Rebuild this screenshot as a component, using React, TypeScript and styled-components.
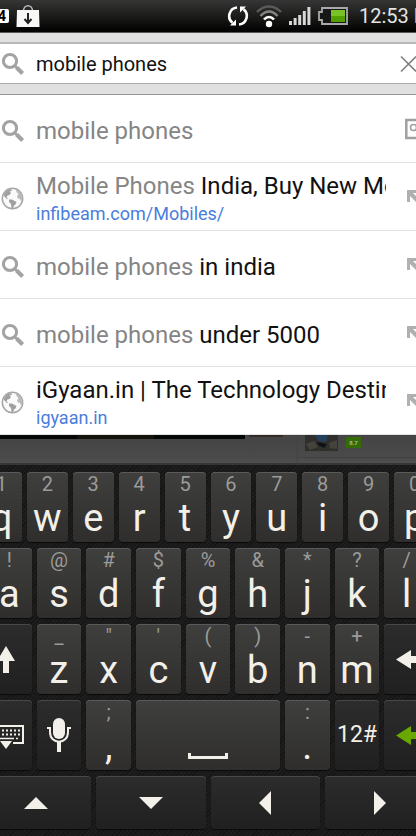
import React from 'react';
import styled, { createGlobalStyle } from 'styled-components';

const GlobalStyle = createGlobalStyle`
  *, *::before, *::after { box-sizing: border-box; }
  body { margin: 0; background: #171717; font-family: Roboto, sans-serif; }
  button, input { font: inherit; border: 0; margin: 0; padding: 0; background: none; }
`;

const Screen = styled.main`
  display: flex;
  flex-direction: column;
  overflow: hidden;
`;

const StatusBar = styled.header`
  display: flex;
  align-items: center;
  justify-content: space-between;
  height: 33px;
  overflow: hidden;
  background: linear-gradient(#363636, #1c1c1a 50%, #000);
  border-bottom: 1px solid #555;
`;

const StatusGroup = styled.div`
  display: flex;
  align-items: center;
  gap: 7px;
`;

const CountBadge = styled.span`
  width: 14px;
  height: 14px;
  margin-left: -5px;
  border-radius: 2px;
  background: #fff;
  color: #000;
  font-size: 14px;
  font-weight: 700;
  line-height: 14px;
  text-align: right;
  padding-right: 3px;
`;

const Clock = styled.time`
  width: 57px;
  margin-left: 4px;
  overflow: hidden;
  white-space: nowrap;
  color: #e4e4e4;
  font-size: 20px;
  line-height: 32px;
`;

const SearchBar = styled.form`
  padding: 9px 0 10px;
  background: #e0e0e0;
  border-bottom: 1px solid #969696;
`;

const SearchField = styled.label`
  display: flex;
  align-items: center;
  height: 42px;
  overflow: hidden;
  background: #fff;
  border-top: 2px solid #b8b8b8;
  border-bottom: 1px solid #aaa;
`;

const SearchInput = styled.input`
  flex: 1;
  min-width: 0;
  color: #111;
  font-size: 20px;
  line-height: 24px;
  outline: none;
`;

const Leading = styled.span`
  display: flex;
  flex: none;
  width: 36px;
  padding-left: 1px;
`;

const ClearButton = styled.button`
  display: flex;
  flex: none;
  width: 16px;
  overflow: hidden;
`;

const Suggestions = styled.ul`
  margin: 0;
  padding: 0;
  list-style: none;
  background: #fff;
`;

const Suggestion = styled.li`
  display: flex;
  align-items: center;
  height: 68px;
  border-bottom: 1px solid #e2e2e2;
`;

const SuggestionLink = styled.a`
  display: flex;
  flex: 1;
  min-width: 0;
  align-items: center;
  padding-top: 4px;
  text-decoration: none;
`;

const SuggestionText = styled.span`
  display: flex;
  flex: 1;
  flex-direction: column;
  min-width: 0;
  overflow: hidden;
`;

const Title = styled.span`
  overflow: hidden;
  white-space: pre;
  color: #111;
  font-size: 24px;
  line-height: 30px;
`;

const Typed = styled.span`
  color: #858585;
`;

const Address = styled.span`
  color: #4a7ddd;
  font-size: 18px;
  line-height: 25px;
`;

const FillButton = styled.button`
  display: flex;
  flex: none;
  justify-content: flex-end;
  width: 30px;
  overflow: hidden;
`;

const PagePeek = styled.div`
  display: flex;
  align-items: flex-start;
  height: 30px;
  background: linear-gradient(#444, #4a4a4a 80%, #505050);
  border-bottom: 2px solid #363636;
`;

const Keyboard = styled.section`
  display: flex;
  flex-direction: column;
  gap: 6px;
  margin: 0 -19px;
  padding: 7px 0 8px;
  background: repeating-linear-gradient(135deg, #151515 0 1px, #1d1d1d 1px 3px);
`;

const KeyRow = styled.div<{ $columns: string; $inset?: boolean; $short?: boolean }>`
  display: grid;
  grid-template-columns: ${(p) => p.$columns};
  gap: 5px;
  height: ${(p) => (p.$short ? 53 : 70)}px;
  padding: 0 ${(p) => (p.$inset ? 6 : 0)}px;
`;

const KeyCap = styled.button<{ $dark?: boolean }>`
  display: flex;
  flex-direction: column;
  align-items: center;
  justify-content: ${(p) => (p.$dark ? 'center' : 'flex-start')};
  min-width: 0;
  border-radius: 4px;
  color: #f3f0e9;
  background: ${(p) => (p.$dark ? 'linear-gradient(#2c2c2c, #202020)' : 'linear-gradient(#3f3f3e, #2f2e2d)')};
  box-shadow: inset 0 1px ${(p) => (p.$dark ? '#484848' : '#5a5a5a')}, 0 1px 1px #0b0b0b;
`;

const Hint = styled.span`
  color: #9b9b9a;
  font-size: 20px;
  line-height: 24px;
`;

const Letter = styled.span`
  font-size: 38px;
  line-height: 44px;
`;

const ModeText = styled.span`
  font-size: 23px;
  line-height: 28px;
`;

const SpaceMark = styled.span`
  width: 40px;
  height: 6px;
  margin-top: 53px;
  border: solid #f3f0e9;
  border-width: 0 3px 3px;
`;

const SearchIcon = () => (
  <svg width="24" height="24" viewBox="0 0 24 24" fill="none" stroke="#a3a3a3" aria-hidden="true">
    <circle cx="9" cy="9" r="6.6" strokeWidth="3" />
    <path d="M14 14l3 3" strokeWidth="2.5" />
    <path d="M15.6 15.6l6 6" strokeWidth="4.2" />
  </svg>
);

const GlobeIcon = () => (
  <svg width="23" height="23" viewBox="0 0 23 23" aria-hidden="true">
    <circle cx="11.5" cy="11.5" r="10.2" fill="#fafafa" stroke="#a6a6a6" strokeWidth="1.5" />
    <path d="M2.500 8L5 4.500L8 2.500L11 2.500L10.500 4L8.500 4.500L10 6L8.500 8L6.500 8.500L5.500 10.500L7.500 12L5.500 11.800L3.500 9.500Z" fill="#a0a0a0" />
    <path d="M8 12.500L11 12.500L15.500 15L14.500 17.500L13 18.500L12 21.500L10.500 21L10 17L8 15Z" fill="#a0a0a0" />
    <path d="M15 2.500L18.500 4.500L21 8L21.500 12L20 14.500L19 12L17 11.500L16 9.500L17.500 7L15.500 5Z" fill="#bababa" />
  </svg>
);

const FillArrow = () => (
  <svg width="10" height="14" viewBox="0 0 10 14" aria-hidden="true">
    <path d="M1 0H14V3H7L15 11L12 14L4 6V12H1Z" fill="#b0b0b0" />
  </svg>
);

const RefineIcon = () => (
  <svg width="11" height="22" viewBox="0 0 11 22" fill="none" stroke="#a0a0a0" aria-hidden="true">
    <path d="M12 2H1.300V20H12" strokeWidth="2.500" />
    <circle cx="8.500" cy="9.500" r="3" strokeWidth="1.600" />
  </svg>
);

const BagIcon = () => (
  <svg width="24" height="24" viewBox="0 0 24 24" aria-hidden="true">
    <path d="M7.500 7C7.500 0 16.500 0 16.500 7" fill="none" stroke="#bbb" strokeWidth="1.500" />
    <path d="M1 6H23L23.500 23H.5Z" fill="#f8f8f8" />
    <path d="M12 9V18M8.500 15L12 19L15.500 15" fill="none" stroke="#222" strokeWidth="2" />
  </svg>
);

const SyncIcon = () => (
  <svg width="22" height="22" viewBox="0 0 22 22" aria-hidden="true">
    <path d="M10 2.500A8.600 8.600 0 0 0 5.500 17.800M12 19.500A8.600 8.600 0 0 0 16.500 4.200" fill="none" stroke="#fff" strokeWidth="2.600" />
    <path d="M3 20.500H9V14.500ZM19 1.500H13V7.500Z" fill="#fff" />
  </svg>
);

const WifiIcon = () => (
  <svg width="26" height="24" viewBox="0 0 26 24" fill="none" strokeWidth="2.500" aria-hidden="true">
    <path d="M1 8C8 .5 18 .5 25 8" stroke="#5a5a5a" />
    <path d="M4.500 12C10 6 16 6 21.500 12" stroke="#858585" />
    <path d="M8 15.500C11 12 15 12 18 15.500" stroke="#fff" />
    <circle cx="13" cy="20" r="3.200" fill="#fff" />
  </svg>
);

const SignalIcon = () => (
  <svg width="22" height="18" viewBox="0 0 22 18" fill="#d8d8d8" aria-hidden="true">
    <path d="M0 14h3v4H0zM4.600 11h3v7h-3zM9.200 8h3v10h-3zM13.800 4h3v14h-3zM18.400 0h3v18h-3z" />
  </svg>
);

const BatteryIcon = () => (
  <svg width="30" height="18" viewBox="0 0 30 18" aria-hidden="true">
    <path d="M4 1H29V17H4V13H1V5H4Z" fill="#171717" stroke="#aaa" strokeWidth="1.800" />
    <path d="M13 3H27V15H13Z" fill="#54a000" />
    <path d="M13 3H27V9H13Z" fill="#79c326" />
  </svg>
);

const ClearIcon = () => (
  <svg width="16" height="18" viewBox="0 0 16 18" fill="none" stroke="#808080" strokeWidth="1.600" aria-hidden="true">
    <path d="M1 1.500L16 16.500M1 16.500L16 1.500" />
  </svg>
);

const PageThumbnails = () => (
  <svg width="416" height="28" viewBox="0 0 416 28" aria-hidden="true">
    <path d="M0 0H245V4H0Z" fill="#060807" />
    <path d="M77 0H154V4H77Z" fill="#15110b" />
    <path d="M249 0H283V2H249Z" fill="#332c25" />
    <path d="M297 0V28M297 22.500H416" stroke="#424242" />
    <path d="M305 0H338V16H305Z" fill="#302f2c" />
    <path d="M306 9L314 6L318 12L310 15ZM329 8L337 5L337 14L330 13Z" fill="#45433e" />
    <path d="M315 0H328L326 7L318 6Z" fill="#24405c" />
    <path d="M317 7L327 9L324 13L318 10Z" fill="#0f1114" />
    <rect x="346" y="2" width="15" height="11" fill="#356b06" />
    <text x="353.500" y="10" textAnchor="middle" fontSize="6" fontWeight="700" fill="#a5b896">8.7</text>
  </svg>
);

const ShiftIcon = () => (
  <svg width="18" height="28" viewBox="0 0 18 28" fill="currentColor" aria-hidden="true">
    <path d="M9 1L18 16H12V28H6V16H0Z" />
  </svg>
);

const LeftArrow = ({ color }: { color: string }) => (
  <svg width="28" height="19" viewBox="0 0 28 19" fill={color} aria-hidden="true">
    <path d="M0 9.500L15 0V6H28V13H15V19Z" />
  </svg>
);

const HideKeyboardIcon = () => (
  <svg width="35" height="29" viewBox="0 -4 35 29" aria-hidden="true">
    <path d="M10 18H1V1H34V18H24" fill="none" stroke="#f3f0e9" strokeWidth="2" />
    <path d="M5 5.500H31M5 9.500H31" stroke="#f3f0e9" strokeWidth="2" strokeDasharray="2 2" />
    <path d="M5 13.500H31" stroke="#f3f0e9" strokeWidth="1.500" strokeDasharray="2 2 16 2" />
    <path d="M11 16H23L17 24Z" fill="#f3f0e9" />
  </svg>
);

const MicIcon = () => (
  <svg width="24" height="34" viewBox="0 0 24 34" aria-hidden="true">
    <rect x="6" y="0" width="12" height="21" rx="6" fill="#f3f0e9" />
    <path d="M0 10H3V14C3 27 21 27 21 14V10H24" fill="none" stroke="#f3f0e9" strokeWidth="2" />
    <path d="M10 24H14V34H10Z" fill="#f3f0e9" />
  </svg>
);

const trianglePaths = {
  Up: 'M0 18L12 6L24 18Z',
  Down: 'M0 6H24L12 18Z',
  Left: 'M18 0V24L6 12Z',
  Right: 'M6 0L18 12L6 24Z',
};

const Triangle = ({ path }: { path: string }) => (
  <svg width="24" height="24" viewBox="0 0 24 24" fill="currentColor" aria-hidden="true">
    <path d={path} />
  </svg>
);

type Key = [hint: string, letter: string];

const topRow: Key[] = [['1', 'q'], ['2', 'w'], ['3', 'e'], ['4', 'r'], ['5', 't'], ['6', 'y'], ['7', 'u'], ['8', 'i'], ['9', 'o'], ['0', 'p']];
const homeRow: Key[] = [['!', 'a'], ['@', 's'], ['#', 'd'], ['$', 'f'], ['%', 'g'], ['&', 'h'], ['*', 'j'], ['?', 'k'], ['/', 'l']];
const bottomRow: Key[] = [['_', 'z'], ['"', 'x'], ["'", 'c'], ['(', 'v'], [')', 'b'], ['-', 'n'], ['+', 'm']];

const CharKey = ({ value: [hint, letter] }: { value: Key }) => (
  <KeyCap type="button">
    <Hint>{hint}</Hint>
    <Letter>{letter}</Letter>
  </KeyCap>
);

type Item = { typed?: string; rest?: string; address?: string; refine?: boolean };

const items: Item[] = [
  { typed: 'mobile phones', refine: true },
  { typed: 'Mobile Phones', rest: ' India, Buy New Mobiles', address: 'infibeam.com/Mobiles/' },
  { typed: 'mobile phones', rest: ' in india' },
  { typed: 'mobile phones', rest: ' under 5000' },
  { rest: 'iGyaan.in | The Technology Destination', address: 'igyaan.in' },
];

export default function App() {
  return (
    <Screen>
      <GlobalStyle />
      <StatusBar>
        <StatusGroup>
          <CountBadge>4</CountBadge>
          <BagIcon />
        </StatusGroup>
        <StatusGroup>
          <SyncIcon />
          <WifiIcon />
          <SignalIcon />
          <BatteryIcon />
          <Clock>12:53 PM</Clock>
        </StatusGroup>
      </StatusBar>
      <SearchBar onSubmit={(e) => e.preventDefault()}>
        <SearchField>
          <Leading><SearchIcon /></Leading>
          <SearchInput type="text" aria-label="Search" defaultValue="mobile phones" />
          <ClearButton type="button" aria-label="Clear"><ClearIcon /></ClearButton>
        </SearchField>
      </SearchBar>
      <Suggestions>
        {items.map((item, i) => (
          <Suggestion key={i}>
            <SuggestionLink href="#">
              <Leading>{item.address ? <GlobeIcon /> : <SearchIcon />}</Leading>
              <SuggestionText>
                <Title><Typed>{item.typed}</Typed>{item.rest}</Title>
                {item.address && <Address>{item.address}</Address>}
              </SuggestionText>
            </SuggestionLink>
            <FillButton type="button" aria-label="Use suggestion">
              {item.refine ? <RefineIcon /> : <FillArrow />}
            </FillButton>
          </Suggestion>
        ))}
      </Suggestions>
      <PagePeek><PageThumbnails /></PagePeek>
      <Keyboard aria-label="Keyboard">
        <KeyRow $columns="repeat(10, 1fr)">
          {topRow.map((k) => <CharKey key={k[1]} value={k} />)}
        </KeyRow>
        <KeyRow $columns="repeat(9, 1fr)" $inset>
          {homeRow.map((k) => <CharKey key={k[1]} value={k} />)}
        </KeyRow>
        <KeyRow $columns="51fr repeat(7, 45fr) 51fr">
          <KeyCap type="button" $dark aria-label="Shift"><ShiftIcon /></KeyCap>
          {bottomRow.map((k) => <CharKey key={k[1]} value={k} />)}
          <KeyCap type="button" $dark aria-label="Backspace"><LeftArrow color="#f3f0e9" /></KeyCap>
        </KeyRow>
        <KeyRow $columns="51fr 45fr 45fr 145fr 45fr 45fr 51fr">
          <KeyCap type="button" $dark aria-label="Hide keyboard"><HideKeyboardIcon /></KeyCap>
          <KeyCap type="button" $dark aria-label="Voice input"><MicIcon /></KeyCap>
          <CharKey value={[';', ',']} />
          <KeyCap type="button" aria-label="Space"><SpaceMark /></KeyCap>
          <CharKey value={[':', '.']} />
          <KeyCap type="button" $dark><ModeText>12#</ModeText></KeyCap>
          <KeyCap type="button" $dark aria-label="Enter"><LeftArrow color="#68a800" /></KeyCap>
        </KeyRow>
        <KeyRow $columns="repeat(4, 1fr)" $short>
          {Object.entries(trianglePaths).map(([name, path]) => (
            <KeyCap key={name} type="button" $dark aria-label={name}><Triangle path={path} /></KeyCap>
          ))}
        </KeyRow>
      </Keyboard>
    </Screen>
  );
}
